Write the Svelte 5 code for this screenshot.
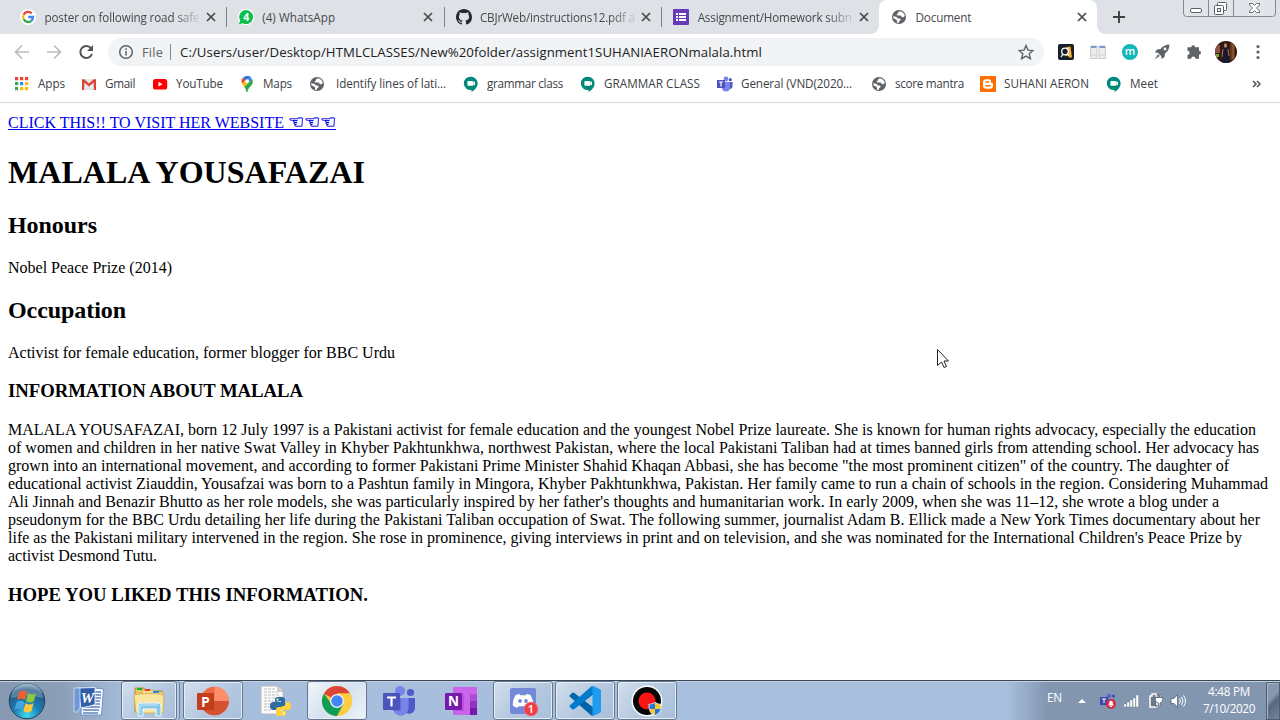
<script>
  // Tracks a label's letter-spacing so that it fills the given width.
  function fit(node, width) {
    const apply = () => {
      node.style.letterSpacing = '0px';
      const natural = node.getBoundingClientRect().width;
      const count = [...node.textContent].length;
      if (width && count) node.style.letterSpacing = `${(width - natural) / count}px`;
    };
    apply();
    document.fonts?.ready.then(apply);
  }

  const tabs = [
    { icon: 'google', title: 'poster on following road safe', w: 155 },
    { icon: 'whatsapp', title: '(4) WhatsApp', w: 73 },
    { icon: 'github', title: 'CBJrWeb/instructions12.pdf a', w: 155 },
    { icon: 'forms', title: 'Assignment/Homework subn', w: 154 },
    { icon: 'globe', title: 'Document', w: 56, active: true }
  ];

  const bookmarks = [
    { icon: 'apps', label: 'Apps', w: 27, slot: 67 },
    { icon: 'gmail', label: 'Gmail', w: 30, slot: 71 },
    { icon: 'youtube', label: 'YouTube', w: 47, slot: 87 },
    { icon: 'maps', label: 'Maps', w: 29, slot: 70 },
    { icon: 'globe', label: 'Identify lines of lati...', w: 110, slot: 154, gap: 11 },
    { icon: 'meet', label: 'grammar class', w: 76, slot: 117 },
    { icon: 'meet', label: 'GRAMMAR CLASS', w: 96, slot: 137 },
    { icon: 'teams', label: 'General (VND(2020...', w: 111, slot: 154 },
    { icon: 'globe', label: 'score mantra', w: 69, slot: 109 },
    { icon: 'blogger', label: 'SUHANI AERON', w: 85, slot: 126 },
    { icon: 'meet', label: 'Meet', w: 28, slot: 80 }
  ];

  const lines = [
    ['MALALA YOUSAFAZAI, born 12 July 1997 is a Pakistani activist for female education and the youngest Nobel Prize laureate. She is known for human rights advocacy, especially the education', 1248],
    ['of women and children in her native Swat Valley in Khyber Pakhtunkhwa, northwest Pakistan, where the local Pakistani Taliban had at times banned girls from attending school. Her advocacy has', 1251],
    ['grown into an international movement, and according to former Pakistani Prime Minister Shahid Khaqan Abbasi, she has become "the most prominent citizen" of the country. The daughter of', 1221],
    ['educational activist Ziauddin, Yousafzai was born to a Pashtun family in Mingora, Khyber Pakhtunkhwa, Pakistan. Her family came to run a chain of schools in the region. Considering Muhammad', 1260],
    ["Ali Jinnah and Benazir Bhutto as her role models, she was particularly inspired by her father's thoughts and humanitarian work. In early 2009, when she was 11–12, she wrote a blog under a", 1211],
    ['pseudonym for the BBC Urdu detailing her life during the Pakistani Taliban occupation of Swat. The following summer, journalist Adam B. Ellick made a New York Times documentary about her', 1252],
    ["life as the Pakistani military intervened in the region. She rose in prominence, giving interviews in print and on television, and she was nominated for the International Children's Peace Prize by", 1234],
    ['activist Desmond Tutu.', 149]
  ];

  const taskbar = [
    { icon: 'word' },
    { icon: 'explorer', open: true, stacked: true },
    { icon: 'powerpoint', open: true },
    { icon: 'python' },
    { icon: 'chrome', open: true, active: true },
    { icon: 'teams' },
    { icon: 'onenote' },
    { icon: 'discord', open: true },
    { icon: 'vscode', open: true },
    { icon: 'recorder', open: true }
  ];
</script>

{#snippet small(name)}
  <svg class="ico" viewBox="0 0 16 16" width="16" height="16">
    {#if name === 'google'}
      <circle cx="8" cy="8" r="8" fill="#fff" />
      <g fill="none" stroke-width="2.3">
        <path d="M11.7 4.4A5 5 0 0 0 3.6 5.7" stroke="#ea4335" />
        <path d="M3.6 5.7a5 5 0 0 0 0 4.6" stroke="#fbbc05" />
        <path d="M3.6 10.3a5 5 0 0 0 7.7 1.5" stroke="#34a853" />
        <path d="M11.3 11.8A5 5 0 0 0 13 8H8.2" stroke="#4285f4" />
      </g>
    {:else if name === 'whatsapp'}
      <circle cx="8" cy="8" r="8.2" fill="#fff" />
      <path d="M8 1a7 7 0 1 1-3.2 13.2L1 15.2l1.2-3.6A7 7 0 0 1 8 1z" fill="#09c04a" />
      <text x="8.2" y="11.6" font-size="10.5" font-weight="700" font-family="Open Sans, sans-serif" fill="#fff" text-anchor="middle">4</text>
    {:else if name === 'github'}
      <path fill="#24292e" d="M8 0C3.58 0 0 3.58 0 8c0 3.54 2.29 6.53 5.47 7.59.4.07.55-.17.55-.38 0-.19-.01-.82-.01-1.49-2.01.37-2.53-.49-2.69-.94-.09-.23-.48-.94-.82-1.13-.28-.15-.68-.52-.01-.53.63-.01 1.08.58 1.23.82.72 1.21 1.87.87 2.33.66.07-.52.28-.87.51-1.07-1.78-.2-3.64-.89-3.64-3.95 0-.87.31-1.59.82-2.15-.08-.2-.36-1.02.08-2.12 0 0 .67-.21 2.2.82a7.6 7.6 0 0 1 4 0c1.53-1.04 2.2-.82 2.2-.82.44 1.1.16 1.92.08 2.12.51.56.82 1.27.82 2.15 0 3.07-1.87 3.75-3.65 3.95.29.25.54.73.54 1.48 0 1.07-.01 1.93-.01 2.2 0 .21.15.46.55.38A8.01 8.01 0 0 0 16 8c0-4.42-3.58-8-8-8z" />
    {:else if name === 'forms'}
      <rect width="16" height="16" rx="1" fill="#673ab7" />
      <path d="M3 4h2v2H3zM6 4h7v2H6zM3 7h2v2H3zM6 7h7v2H6zM3 10h2v2H3zM6 10h7v2H6z" fill="#fff" />
    {:else if name === 'globe'}
      <circle cx="8" cy="8" r="7" fill="#5f6368" />
      <path d="M8.5 2.2 7 3.5v1.3H5.8v1.4l1.8.3h2.2l1.1 1.8h1.2l1.8-1.2A6 6 0 0 0 8.5 2.2zM2.1 7.2l3.2.5 1.8 1.7h2l.6 1.5-1.5 1.4-.6 1.6-1.8-.4.3-2-1.5-1.2-2-.7z" fill="#fff" />
    {:else if name === 'apps'}
      <g fill="#ea4335"><path d="M1 1h3.2v3.2H1zM6 1h3.2v3.2H6zM11 1h3.2v3.2H11z" /></g>
      <path d="M1 6h3.2v3.2H1z" fill="#34a853" /><path d="M6 6h3.2v3.2H6z" fill="#2684fc" /><path d="M11 6h3.2v3.2H11z" fill="#fbbc04" />
      <path d="M1 11h3.2v3.2H1z" fill="#34a853" /><path d="M6 11h3.2v3.2H6zM11 11h3.2v3.2H11z" fill="#fbbc04" />
    {:else if name === 'gmail'}
      <path d="M2 3h12v11H2z" fill="#e6e6e6" /><path d="M3 13 8 8l5 5" fill="none" stroke="#fafafa" />
      <path d="M1 3.2h2.2L8 7.6l4.8-4.4H15V14h-2.2V6.4L8 10.5 3.2 6.4V14H1z" fill="#db4437" />
    {:else if name === 'youtube'}
      <rect x="1" y="3" width="14.2" height="10.6" rx="2.6" fill="#f00" /><path d="m6.5 5.8 4 2.4-4 2.4z" fill="#fff" />
    {:else if name === 'maps'}
      <path d="M8 0a5.6 5.6 0 0 0-4 1.7l3 2.7L11.7.9A5.6 5.6 0 0 0 8 0z" fill="#1a73e8" />
      <path d="M4 1.7a5.3 5.3 0 0 0-.8 6l3.9-4.2z" fill="#ea4335" />
      <path d="M10 .4 6 5.3l4 1.8 3-4A5.4 5.4 0 0 0 10 .4z" fill="#4285f4" />
      <path d="m3.2 7.7 3.3-3.4 2.2 3-3.4 3.900C4.500 10.100 3.700 9 3.200 7.700z" fill="#fbbc04" />
      <path d="M13 3.100 5.300 11c1 1.500 1.500 2 2 4.400.2.8 1.100.8 1.300 0 .7-3.700 3-4.400 4.700-7.500.8-1.600.6-3.300-.3-4.800z" fill="#34a853" />
      <circle cx="8.200" cy="5.200" r="1.900" fill="#fff" />
    {:else if name === 'meet'}
      <path d="M8 .8a6.600 6.600 0 0 1 6.600 6.600c0 3.700-3 6.800-6.200 8.300V13.900A6.600 6.600 0 1 1 8 .8z" fill="#00897b" />
      <rect x="4.400" y="5" width="6" height="4.800" rx=".7" fill="#fff" /><path d="m10 7 2-1.700v4.200L10 7.900z" fill="#fff" />
    {:else if name === 'teams'}
      <circle cx="9" cy="3" r="2.400" fill="#7b83eb" /><circle cx="13.300" cy="3.700" r="1.600" fill="#5059c9" />
      <path d="M11 6h4.500v4.500a2.800 2.800 0 0 1-4.500 2z" fill="#5059c9" /><path d="M5 6h8v5.500a4 4 0 0 1-8 0z" fill="#7b83eb" />
      <rect y="4" width="8" height="8" fill="#4b53bc" /><path d="M2 6h4M4 6v4.500" stroke="#fff" stroke-width="1.200" />
    {:else if name === 'blogger'}
      <rect width="16" height="16" rx="1" fill="#ff6c00" />
      <path d="M6 3.300h2.500c1.800 0 2.600 1 2.600 2.500 0 .9.400 1.200 1 1.200s.9.400.9 1v1.800c0 2-1.200 3-3 3H6c-1.900 0-3-1-3-3V6.300c0-2 1.100-3 3-3z" fill="#fff" />
      <path d="M6 6h2.300M6 9.800h4" stroke="#ff6c00" stroke-width="1.500" stroke-linecap="round" />
    {/if}
  </svg>
{/snippet}

{#snippet large(name)}
  <svg class="ico" viewBox="0 0 32 32" width="32" height="32">
    {#if name === 'word'}
      <path d="M9 1.500 30.500 4l-2 26L8 30z" fill="#f8fbff" stroke="#6f91c6" />
      <path d="M22 7h6M22 10h6M22 13h6M21 16h6M20 19h7M11 22h16M10 25h16M10 28h15" stroke="#5c82be" stroke-width="1.400" />
      <path d="M5 3 22 2.500v17L17 21 8 23z" fill="#315da8" stroke="#dce8fa" />
      <path d="M1 3h6v20l-3 4H1z" fill="#6f98d6" stroke="#dce8fa" stroke-width=".7" />
      <text x="14.500" y="17.500" font-size="15" font-weight="700" font-style="italic" font-family="Liberation Serif, serif" fill="#fff" text-anchor="middle">W</text>
    {:else if name === 'explorer'}
      <path d="M2 6V3h9l2 3h16v21H2z" fill="#e6c567" stroke="#b88c2c" />
      <path d="M9 5h10l2 2h9v17H9z" fill="#f5db8a" stroke="#caa041" stroke-width=".7" />
      <path d="M4 3h5v2H4z" fill="#14b431" /><path d="M12 4h5v2h-5z" fill="#e04324" /><path d="M20 6h6v2h-6z" fill="#2888db" />
      <path d="M1 10c8-2 21-2 30 0l-1 18H3z" fill="#f8e6a0" stroke="#d0a94a" stroke-width=".8" />
      <path d="M5 31V21q0-3 3-3h17q3 0 3 3v10h-5v-7H10v7z" fill="#87c7e8" stroke="#f1fbff" />
      <path d="M7 29v-8q0-1 1-1h17" stroke="#c9effc" fill="none" />
    {:else if name === 'powerpoint'}
      <circle cx="17.500" cy="16" r="14.300" fill="#ed6c47" /><path d="M17.500 1.700A14.300 14.300 0 0 1 31.800 16H17.500z" fill="#ff8f6b" />
      <path d="M3.200 16h28.600a14.300 14.300 0 0 1-28.600 0z" fill="#d35230" />
      <rect y="8" width="17" height="17" rx="1" fill="#c43e1c" />
      <text x="8.500" y="21.500" font-size="14" font-weight="700" font-family="Open Sans, sans-serif" fill="#fff" text-anchor="middle">P</text>
    {:else if name === 'python'}
      <path d="M2 1h17l5 5v23H2z" fill="#fafafa" stroke="#b8bbc0" /><path d="M19 1v5h5" fill="#ddd" stroke="#aaa" />
      <path d="M5 4h12M5 7h14M5 10h16M5 13h14M5 16h10M5 19h8M5 22h9M5 25h7" stroke="#b7bbc2" stroke-dasharray="3 1" />
      <path d="M16 17v-3c0-3 10-3 10 0v6c0 3-8 1-9 5h-3c-4 0-4-8 0-8h8v-1z" fill="#2f6c9f" />
      <path d="M27 17h2c4 0 4 8 0 8h-7v1h5v3c0 3-10 3-10 0v-5c0-3 9-1 10-5z" fill="#ffd43b" />
      <circle cx="18.500" cy="14.500" r="1" fill="#fff" /><circle cx="24.500" cy="28.500" r="1" fill="#fff" />
    {:else if name === 'chrome'}
      <circle cx="16" cy="16" r="15" fill="#fbc52d" />
      <path d="M16 16 3 8.500A15 15 0 0 1 29 8.500H16z" fill="#db4437" />
      <path d="M3 8.500A15 15 0 0 0 16 31l6-12-12-.5z" fill="#0f9d58" />
      <path d="m9.500 19.500 6.500-1 6-2 .4 3L16 31q-2 0-3-.4z" fill="#0f9d58" />
      <path d="M29 8.500H16l6.500 11L16 31A15 15 0 0 0 29 8.500z" fill="#ffcd40" />
      <circle cx="16" cy="16" r="7" fill="#f3f3f3" /><circle cx="16" cy="16" r="5.700" fill="#4285f4" />
    {:else if name === 'teams'}
      <circle cx="17" cy="6" r="5" fill="#7b83eb" /><circle cx="27.500" cy="7.500" r="3.600" fill="#5059c9" />
      <path d="M23 13h9v10a6 6 0 0 1-9 5z" fill="#5059c9" /><path d="M10 13h15.500v10a7.500 7.500 0 0 1-15.500 0z" fill="#7b83eb" />
      <path d="M10 13h8v13h-7.500z" fill="#555dbe" opacity=".55" />
      <rect y="8" width="17" height="17" rx="1" fill="#4b53bc" /><path d="M4 12.500h9M8.500 12.500v9" stroke="#fff" stroke-width="2.200" />
    {:else if name === 'onenote'}
      <rect x="8" y="2" width="24" height="28" rx="1" fill="#ca64ea" />
      <path d="M25 9h7v7h-7z" fill="#ae4bd5" /><path d="M25 16h7v7h-7z" fill="#9332bf" /><path d="M25 23h7v7h-7z" fill="#7719aa" />
      <path d="M8 9h11v17H8z" fill="#a844c5" opacity=".5" /><rect y="8" width="17" height="17" rx="1" fill="#7719aa" />
      <text x="8.500" y="21.200" font-size="13.500" font-weight="700" font-family="Open Sans, sans-serif" fill="#fff" text-anchor="middle">N</text>
    {:else if name === 'discord'}
      <rect x="3" y="3" width="26" height="26" rx="2" fill="#7289da" />
      <path d="m12.500 9 .5 1.200h6L19.500 9q3 .4 4.300 1.500 2.700 5 2.400 10-2 2-4.700 2.200l-1.100-1.500h-8.800l-1.100 1.500q-2.700-.2-4.700-2.200-.3-5 2.400-10Q9.500 9.400 12.500 9z" fill="#fff" />
      <circle cx="13" cy="16" r="1.900" fill="#7289da" /><circle cx="19" cy="16" r="1.900" fill="#7289da" />
      <circle cx="24" cy="24" r="7" fill="#ed4245" stroke="#f68185" stroke-width=".6" />
      <text x="24" y="28" font-size="11" font-weight="600" font-family="Open Sans, sans-serif" fill="#fff" text-anchor="middle">1</text>
    {:else if name === 'vscode'}
      <path d="M.7 10.200 3.300 7.800q.9-.6 1.700 0L24 22.300v8.500q-1 .5-2-.5L.7 11.500q-.7-.7 0-1.300z" fill="#0065a9" />
      <path d="m.7 21.800 2.600 2.400q.9.600 1.700 0L24 9.700V1.200q-1-.5-2 .5L.7 20.500q-.7.700 0 1.300z" fill="#007acc" />
      <path d="m24 1 7.200 3.300q.8.400.8 1.400v20.600q0 1-.8 1.400L24 31q-1.200.4-2-.5 1.500.6 1.500-1V2.500q0-1.600-1.500-1 .8-.9 2-.5z" fill="#1f9cf0" />
    {:else if name === 'recorder'}
      <circle cx="16" cy="16" r="15.500" fill="#fff" /><circle cx="16" cy="16" r="14" fill="#050505" /><circle cx="16" cy="16" r="8.500" fill="#fa1414" />
      <path d="M24 17q3 2 6.500 2 .7 9-6.500 12-7.200-3-6.500-12 3.500 0 6.500-2z" fill="#dceaf8" />
      <path d="M24 18v6h-5.500v-4.500Q22 19.300 24 18zM24 24h5.500Q28.500 28 24 30z" fill="#2675d8" />
      <path d="M24 18q2 1.300 5.500 1.500V24H24zM18.500 24H24v6q-4.500-2-5.500-6z" fill="#f8c82e" />
    {/if}
  </svg>
{/snippet}

<div class="screen">
  <header class="tabstrip">
    {#each tabs as tab, i}
      <div class="tab" class:active={tab.active} class:divided={i < 3}>
        {@render small(tab.icon)}
        <div class="title" class:fade={tab.w > 100}><span use:fit={tab.w}>{tab.title}</span></div>
        <svg class="close" viewBox="0 0 10 10" width="10" height="10"><path d="m1 1 8 8M9 1 1 9" stroke="#45494d" stroke-width="1.700" /></svg>
      </div>
    {/each}
    <svg class="plus" viewBox="0 0 12 12" width="12" height="12"><path d="M6 0v12M0 6h12" stroke="#3c4043" stroke-width="1.900" /></svg>
    <svg class="winctl" viewBox="0 0 94 18" width="94" height="18">
      <path d="M.5 0v13q0 3.500 3 3.500h86q3 0 3-3.500V0M25.500 0v16M50.500 0v16" fill="#e2e4e9" stroke="#84888f" />
      <rect x="7.500" y="8.500" width="11" height="4" rx="1.500" fill="#fff" stroke="#5a5e68" />
      <g fill="#fff" stroke="#5a5e68"><rect x="34.500" y="2.500" width="9" height="8" rx="1" /><rect x="31.500" y="5.500" width="9" height="9" rx="1" /><rect x="34.500" y="8.500" width="3" height="3" /></g>
      <path d="M66.500 3.500h3l2 2 2-2h3v1.500l-3 3 3 3v1.500h-3l-2-2-2 2h-3V11l3-3-3-3z" fill="#fff" stroke="#5a5e68" stroke-width=".9" />
    </svg>
  </header>

  <div class="toolbar">
    <svg class="nav" viewBox="0 0 90 20" width="90" height="20" fill="none" stroke-width="1.700">
      <path d="M15 10H2M8 3.500 1.500 10 8 16.500M33 10h13M40 3.500l6.500 6.500-6.500 6.500" stroke="#babcbe" />
      <path d="M77 6.200A6 6 0 1 0 78 12" stroke="#505458" stroke-width="2" /><path d="M79 3v6h-6z" fill="#505458" />
    </svg>
    <div class="omnibox">
      <svg viewBox="0 0 16 16" width="16" height="16" fill="none" stroke="#5f6368" stroke-width="1.500"><circle cx="8" cy="8" r="6.300" /><path d="M8 7v4.500M8 4.300v1.600" /></svg>
      <div class="scheme"><span use:fit={21}>File</span></div>
      <div class="url"><span use:fit={582}>C:/Users/user/Desktop/HTMLCLASSES/New%20folder/assignment1SUHANIAERONmalala.html</span></div>
      <svg class="star" viewBox="0 0 16 16" width="16" height="16"><path d="m8 1.500 2 4.600 5 .4-3.800 3.300 1.200 4.900L8 12.100l-4.400 2.600 1.200-4.900L1 6.500l5-.4z" fill="none" stroke="#5f6368" stroke-width="1.400" /></svg>
    </div>
    <div class="extensions">
      <svg viewBox="0 0 16 16" width="16" height="16"><rect width="16" height="16" rx="2" fill="#16202b" /><path d="m8.500 3 4-.5 1.500 11h-3l-.5-3-3 2" fill="#fdb62b" /><circle cx="7" cy="7.500" r="3.300" fill="#16202b" stroke="#fff" stroke-width="1.300" /><path d="m5 10-2 3M9 10l2 2" stroke="#fff" stroke-width="1.300" /></svg>
      <svg viewBox="0 0 16 16" width="16" height="16"><path d="M.5 2h6.500v12.500H.5zM9 2h6.500v12.500H9z" fill="#eceded" stroke="#c8cacc" /><path d="M1 2h5.500v2H1zM9.500 2H15v2H9.500z" fill="#7a9cd0" /><path d="M1 11h5.500M9.500 11H15" stroke="#d0d1d2" /></svg>
      <svg viewBox="0 0 16 16" width="16" height="16"><circle cx="8" cy="8" r="8" fill="#12b8b8" /><text x="8" y="11.400" text-anchor="middle" font-size="11" font-weight="600" font-family="Open Sans, sans-serif" fill="#fff">m</text></svg>
      <svg viewBox="0 0 16 16" width="16" height="16"><path d="M15.500.5Q10 .5 6.500 5L3 5.500.8 8.600l3 .2 3.500 3.500.2 2.700 3-2 .5-3.500Q15.500 6 15.500.5z" fill="#5f6368" /><path d="M4 10 .5 15.500 6 12z" fill="#777b80" /><circle cx="11" cy="5" r="1.400" fill="#fff" /></svg>
      <svg viewBox="0 0 16 16" width="16" height="16"><path d="M5.200 3.200a2 2 0 0 1 4 0H13v3.600a2 2 0 0 1 0 4v3.900H9.400a2.100 2.100 0 0 0-4.200 0H1.500V11a2.100 2.100 0 0 0 0-4.200V3.200z" fill="#5f6368" /></svg>
      <svg class="avatar" viewBox="0 0 22 22" width="22" height="22"><defs><clipPath id="round"><circle cx="11" cy="11" r="11" /></clipPath></defs><g clip-path="url(#round)"><path d="M0 0h22v22H0z" fill="#32180f" /><path d="M0 4h5v8H0z" fill="#8d5042" /><path d="M1 13h3v3H1z" fill="#6faf31" /><path d="M15 2h5v17h-5z" fill="#66391e" /><path d="M18 3v15" stroke="#a06b3d" /><path d="M8 6q3-5 5 0v5l2 11H7z" fill="#171b30" /><ellipse cx="10.500" cy="4.500" rx="1.600" ry="2.200" fill="#b78672" /><path d="m8 8-1 8M13 8l1 7" stroke="#b87761" /></g></svg>
      <svg class="dots" viewBox="0 0 4 16" width="4" height="16" fill="#5f6368"><circle cx="2" cy="2.500" r="1.600" /><circle cx="2" cy="8" r="1.600" /><circle cx="2" cy="13.500" r="1.600" /></svg>
    </div>
  </div>

  <nav class="bookmarks">
    {#each bookmarks as b}
      <div class="bookmark" style:width="{b.slot}px" style:gap="{b.gap ?? 8}px">
        {@render small(b.icon)}<span use:fit={b.w}>{b.label}</span>
      </div>
    {/each}
    <svg class="more" viewBox="0 0 9 8" width="9" height="8"><path d="m1 1 3 3-3 3M5 1l3 3-3 3" fill="none" stroke="#50545a" stroke-width="1.500" /></svg>
  </nav>

  <main>
    <a href="#website"><span use:fit={280}>{'CLICK THIS!! TO VISIT HER WEBSITE '}</span><span class="hands" use:fit={48}>☜☜☜</span></a>
    <h1><span use:fit={357}>MALALA YOUSAFAZAI</span></h1>
    <h2><span use:fit={89}>Honours</span></h2>
    <p><span use:fit={164}>Nobel Peace Prize (2014)</span></p>
    <h2><span use:fit={118}>Occupation</span></h2>
    <p><span use:fit={387}>Activist for female education, former blogger for BBC Urdu</span></p>
    <h3><span use:fit={295}>INFORMATION ABOUT MALALA</span></h3>
    <p class="bio">
      {#each lines as [text, width]}
        <span class="line"><span use:fit={width}>{text}</span></span>
      {/each}
    </p>
    <h3><span use:fit={360}>HOPE YOU LIKED THIS INFORMATION.</span></h3>
  </main>

  <footer>
    <svg class="start" viewBox="0 0 38 38" width="38" height="38">
      <defs><radialGradient id="orb" cx=".5" cy=".9" r=".9"><stop offset="0" stop-color="#43d9f3" /><stop offset=".4" stop-color="#1b80b3" /><stop offset=".8" stop-color="#245580" /><stop offset="1" stop-color="#8cb6cd" /></radialGradient></defs>
      <circle cx="19" cy="19" r="17.800" fill="url(#orb)" stroke="#25435f" />
      <path d="M3 16a16 16 0 0 1 32 0q-16-5-32 0z" fill="#fff" opacity=".24" />
      <path d="M11 10q4-3 8 0l-2 8q-4-3-8 0z" fill="#ef6033" /><path d="M20 11q4 3 8 0l-2 8q-4 3-8 0z" fill="#91c73d" />
      <path d="M8.500 20q4-3 8 0l-2 8q-4-3-8 0z" fill="#43a4df" /><path d="M17.500 21q4 3 8 0l-2 8q-4 3-8 0z" fill="#fdc938" />
    </svg>
    <div class="tasks">
      {#each taskbar as t}
        <div class="task" class:open={t.open} class:current={t.active} class:stacked={t.stacked}>{@render large(t.icon)}</div>
      {/each}
    </div>
    <div class="tray">
      <div class="lang"><span use:fit={15}>EN</span></div>
      <svg class="up" viewBox="0 0 8 4" width="8" height="4"><path d="M0 4 4 0l4 4z" fill="#fff" /></svg>
      <svg class="notify" viewBox="0 0 16 16" width="16" height="16"><circle cx="9" cy="3" r="2.200" fill="#5c63c8" /><circle cx="13.500" cy="3" r="1.600" fill="#4249a8" /><path d="M6 6h9v6H6z" fill="#6971d5" /><path d="M0 4h8v8H0z" fill="#3f48a9" /><path d="M2 6h4M4 6v4" stroke="#fff" /><circle cx="11" cy="11" r="5" fill="#d62c46" /><path d="M8 12.500 9.200 11V9.500a1.800 1.800 0 0 1 3.600 0V11l1.200 1.500zM10 13h2v1h-2z" fill="#fff" /></svg>
      <svg class="signal" viewBox="0 0 16 14" width="16" height="14"><path d="M0 10h2.500v3H0zM3 8h2.500v5H3zM6 6h2.500v7H6zM9 4h2.500v9H9zM12 1h2.500v12H12z" fill="#fff" stroke="#56667b" stroke-width=".3" /></svg>
      <svg class="power" viewBox="0 0 16 16" width="16" height="16"><path d="M2 3h2V1h4v2h1v11H2z" fill="#68798f" stroke="#fff" stroke-width="1.500" /><path d="M7.500 4.500h7v2q0 3-2.500 3.500v2q0 2-2 2H8v-1.500h2.500V10q-3-.5-3-3.500zM9 1.500h1.300v3H9zM12 1.500h1.300v3H12z" fill="#fff" stroke="#3e4c5e" stroke-width=".6" /></svg>
      <svg class="sound" viewBox="0 0 16 16" width="16" height="16"><path d="M1 5.500h3L7.500 1.500v13L4 10.500H1z" fill="#f8fafc" stroke="#45566d" stroke-width=".7" /><path d="M9.500 5.500q1.500 2.500 0 5M11.500 4q3 4 0 8M13.500 2.500q4 5.500 0 11" fill="none" stroke="#fff" /></svg>
      <div class="clock"><span use:fit={42}>4:48 PM</span><span use:fit={52}>7/10/2020</span></div>
      <div class="desktop"></div>
    </div>
  </footer>

  <svg class="cursor" viewBox="0 0 12 20" width="12" height="20"><path d="M.5.500v16l4-3.500 2.500 5.500 2.500-1L7 12h4.500z" fill="#fff" stroke="#222431" /></svg>
</div>

<style>
  :global(body) { margin: 0; overflow: hidden; }
  .screen { width: 1280px; height: 720px; display: flex; flex-direction: column; background: #fff; font-family: 'Open Sans', 'Noto Sans', sans-serif; overflow: hidden; position: relative; }
  svg { flex: none; display: block; }
  span { white-space: pre; }

  .tabstrip { height: 34px; flex: none; display: flex; align-items: center; background: #dee1e6; padding-left: 8px; }
  .tab { width: 217.750px; height: 34px; flex: none; display: flex; align-items: center; padding-left: 12px; box-sizing: border-box; font-size: 11.700px; color: #45494d; position: relative; }
  .tab.active { background: #fff; border-radius: 8px 8px 0 0; }
  .tab.active::before, .tab.active::after { content: ''; position: absolute; bottom: 0; width: 8px; height: 8px; }
  .tab.active::before { left: -8px; background: radial-gradient(circle at 0 0, transparent 7.500px, #fff 8px); }
  .tab.active::after { right: -8px; background: radial-gradient(circle at 100% 0, transparent 7.500px, #fff 8px); }
  .tab.divided::after { content: ''; position: absolute; right: -1px; top: 7px; width: 1px; height: 20px; background: #808489; }
  .title { width: 156px; margin-left: 8.400px; line-height: 18px; padding-bottom: 1px; }
  .title.fade { mask-image: linear-gradient(90deg, #000 130px, transparent 158px); }
  .title span { display: inline-block; }
  .close { margin-left: 5.300px; }
  .plus { margin-left: 16px; }
  .winctl { margin-left: auto; margin-right: 3px; align-self: flex-start; }

  .toolbar { height: 36px; flex: none; display: flex; align-items: center; padding-left: 14px; }
  .nav { margin-right: 4px; }
  .omnibox { width: 936px; height: 28px; border-radius: 14px; background: #f1f3f4; display: flex; align-items: center; padding: 0 10px; box-sizing: border-box; font-size: 13.200px; color: #202124; }
  .scheme { width: 28px; margin-left: 8px; border-right: 1px solid #80868b; line-height: 17px; height: 16px; font-size: 12.700px; color: #5f6368; }
  .url { margin-left: 9px; }
  .star { margin-left: auto; }
  .extensions { display: flex; align-items: center; gap: 16px; margin-left: 14px; }
  .avatar { margin-left: -3px; }
  .dots { margin-left: 3px; }

  .bookmarks { height: 28px; flex: none; display: flex; align-items: center; padding: 0 19px 4px 14px; border-bottom: 1px solid #d5d6d8; font-size: 11.700px; color: #3c4043; }
  .bookmark { display: flex; align-items: center; flex: none; }
  .bookmark span { padding-bottom: 2px; }
  .more { margin-left: auto; }

  main { height: 577px; box-sizing: border-box; padding: 8px; font: 16px/18px 'Liberation Serif', 'Times New Roman', serif; color: #000; }
  a { display: block; height: 22px; line-height: 24px; color: #0000ee; text-decoration: underline; white-space: pre; }
  .hands { font-family: 'DejaVu Sans', sans-serif; font-size: 18px; line-height: 18px; -webkit-text-stroke: .4px #0000ee; }
  h1 { font-size: 32px; line-height: 36px; margin: 20.640px 0 22.240px; }
  h2 { font-size: 24px; line-height: 27px; margin: 19.920px 0; }
  h3 { font-size: 18.720px; line-height: 21px; margin: 18.720px 0; }
  p { margin: 16px 0; }
  .bio { margin-top: 19.720px; }
  .line { display: block; height: 18px; }

  footer { height: 40px; flex: none; box-sizing: border-box; border-top: 1px solid #3b4654; box-shadow: inset 0 1px #c3d1e3; display: flex; align-items: center; background: linear-gradient(90deg, #8799b2 0, #8b9eb8 60px, #a6bedb 128px, #a8c0de 1005px, #8296b0 1048px, #8296b0 100%); padding-left: 8px; }
  .start { margin-right: 13px; }
  .tasks { display: flex; gap: 2px; align-self: stretch; }
  .task { width: 60px; height: 39px; display: flex; align-items: center; justify-content: center; box-sizing: border-box; border: 1px solid transparent; }
  .open { border-color: #66788f; border-radius: 3px; background: linear-gradient(135deg, #d2dfed, #b4c8df 55%, #a9bfda); box-shadow: inset 0 0 0 1px #e4edf7; }
  .current { background: linear-gradient(135deg, #f2f6fa, #d4e1ee 50%, #edf3f8); }
  .stacked { width: 56px; margin-right: 4px; box-shadow: inset 0 0 0 1px #e4edf7, 2px 0 #b5c9e0, 3px 0 #6d8098; }
  .tray { margin-left: auto; display: flex; align-items: center; align-self: stretch; color: #fff; font-size: 11.700px; }
  .lang { width: 31px; padding-bottom: 7px; }
  .notify { margin-left: 14px; }
  .signal { margin-left: 8px; }
  .power { margin-left: 8px; }
  .sound { margin-left: 6px; }
  .clock { width: 74px; margin-left: 6px; display: flex; flex-direction: column; align-items: center; line-height: 17px; padding-bottom: 1px; }
  .desktop { width: 14px; height: 38px; box-sizing: border-box; border: 1px solid #4c5d74; box-shadow: inset 1px 1px #a9b7c8; background: linear-gradient(135deg, #8798ad 40%, #566981 55%, #73869d); }
  .cursor { position: absolute; left: 937px; top: 349px; }
</style>
